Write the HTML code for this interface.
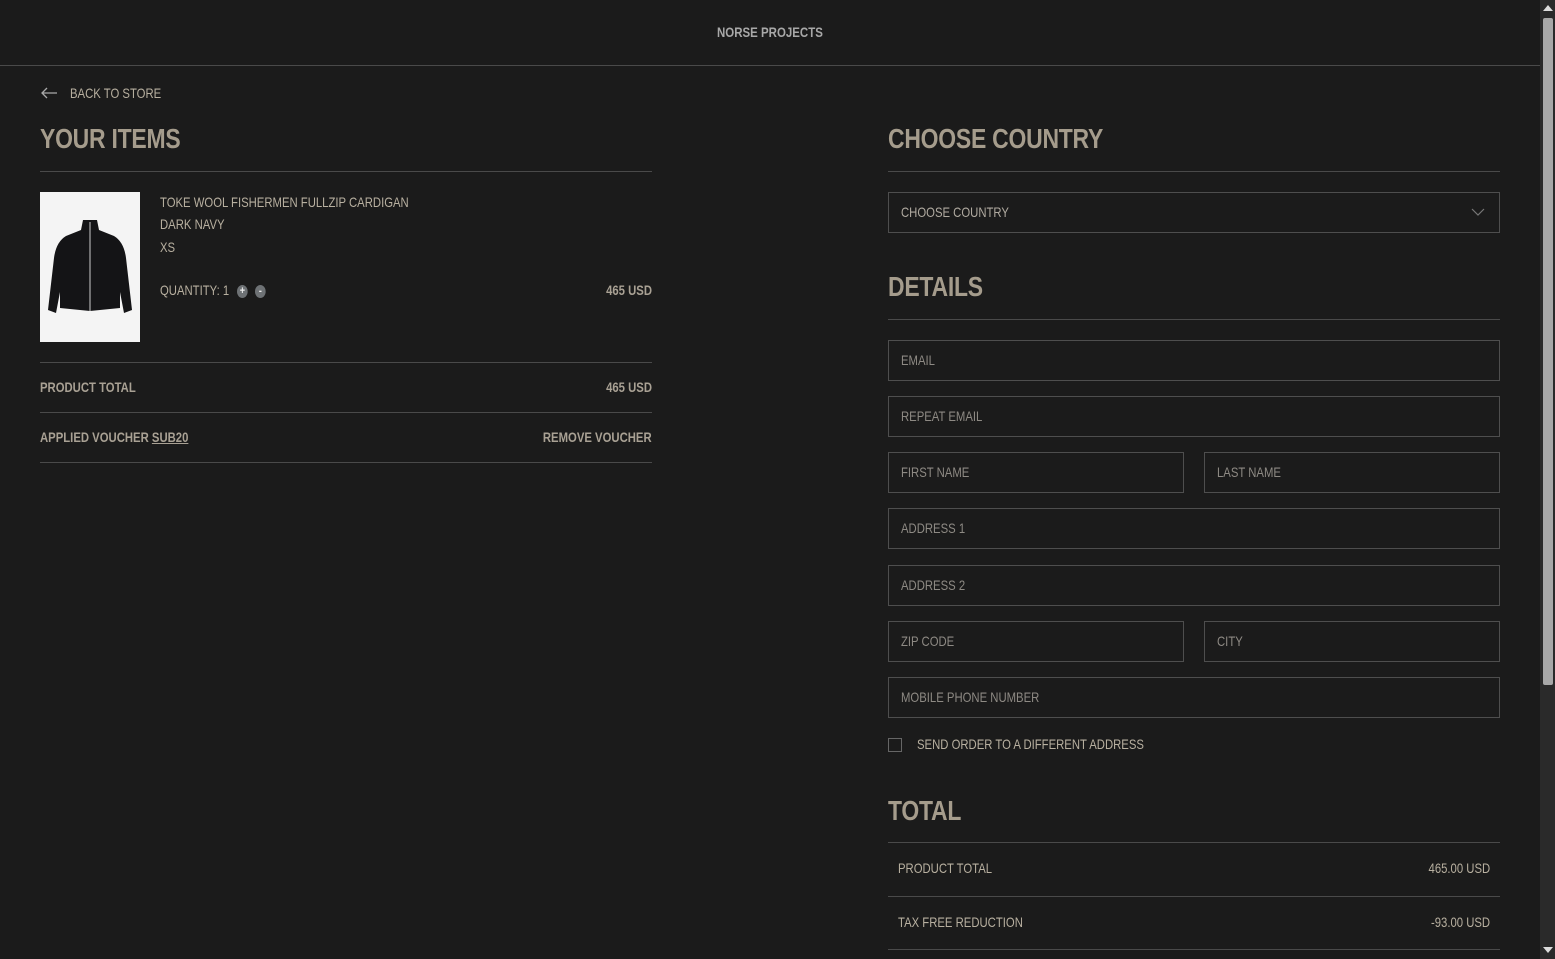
<!DOCTYPE html>
<html><head><meta charset="utf-8"><style>
*{margin:0;padding:0;box-sizing:border-box}
html,body{width:1555px;height:959px;overflow:hidden;background:#1b1b1b}
body{position:relative;font-family:"Liberation Sans Narrow","Liberation Sans",sans-serif;color:#b8b0a0;font-size:13.8px}
.a{position:absolute;white-space:nowrap}
.hd{font-weight:bold;font-size:28px;color:#a59c8c;letter-spacing:-0.3px}
.line{position:absolute;height:1px;background:#4a4a4a}
.box{position:absolute;border:1px solid #4e4e4e;height:41px}
.box span{position:absolute;left:12px;top:12px;font-size:13.8px;color:#8e8a84}
.b{font-weight:bold;color:#a9a194}
</style></head><body>
<div class="a b" style="left:717px;top:24px;font-size:14px;color:#a8a8a8">NORSE PROJECTS</div>
<div class="line" style="left:0;top:65px;width:1540px"></div>

<svg class="a" style="left:40px;top:86px" width="20" height="14" viewBox="0 0 20 14"><path d="M17 7H2M7 2L2 7l5 5" stroke="#aaa" stroke-width="1.3" fill="none"/></svg>
<div class="a" style="left:70px;top:86px">BACK TO STORE</div>

<div class="a hd" style="left:40px;top:123px">YOUR ITEMS</div>
<div class="line" style="left:40px;top:171px;width:612px"></div>

<div class="a" style="left:40px;top:192px;width:100px;height:150px;background:#f4f4f4">
<svg width="100" height="150" viewBox="0 0 100 150"><path d="M43 28 L57 28 L59 38 L74 44 Q84 50 86 66 L92 118 L84 121 L80 100 L80 116 L50 119 L20 116 L20 100 L16 121 L8 118 L14 66 Q16 50 26 44 L41 38 Z" fill="#141416"/><line x1="50" y1="30" x2="50" y2="119" stroke="#ccc" stroke-width="1"/></svg>
</div>
<div class="a" style="left:160px;top:195px">TOKE WOOL FISHERMEN FULLZIP CARDIGAN</div>
<div class="a" style="left:160px;top:217px">DARK NAVY</div>
<div class="a" style="left:160px;top:240px">XS</div>
<div class="a" style="left:160px;top:283px">QUANTITY: 1</div>
<div class="a" style="left:237px;top:285px;width:13px;height:13px;border-radius:50%;background:#6e7275;color:#eee;font-size:11px;line-height:13px;text-align:center;font-weight:bold">+</div>
<div class="a" style="left:255px;top:285px;width:13px;height:13px;border-radius:50%;background:#6e7275;color:#eee;font-size:11px;line-height:12px;text-align:center;font-weight:bold">-</div>
<div class="a b" style="right:903px;top:283px">465 USD</div>

<div class="line" style="left:40px;top:362px;width:612px"></div>
<div class="a b" style="left:40px;top:380px">PRODUCT TOTAL</div>
<div class="a b" style="right:903px;top:380px">465 USD</div>
<div class="line" style="left:40px;top:412px;width:612px"></div>
<div class="a b" style="left:40px;top:430px">APPLIED VOUCHER <u>SUB20</u></div>
<div class="a b" style="right:903px;top:430px">REMOVE VOUCHER</div>
<div class="line" style="left:40px;top:462px;width:612px"></div>

<div class="a hd" style="left:888px;top:123px">CHOOSE COUNTRY</div>
<div class="line" style="left:888px;top:171px;width:612px"></div>
<div class="box" style="left:888px;top:192px;width:612px"><span style="color:#b0aaa0">CHOOSE COUNTRY</span>
<svg style="position:absolute;right:14px;top:15px" width="14" height="9" viewBox="0 0 14 9"><path d="M1 1l6 6 6-6" stroke="#777" fill="none" stroke-width="1.2"/></svg></div>

<div class="a hd" style="left:888px;top:271px">DETAILS</div>
<div class="line" style="left:888px;top:319px;width:612px"></div>
<div class="box" style="left:888px;top:340px;width:612px"><span>EMAIL</span></div>
<div class="box" style="left:888px;top:396px;width:612px"><span>REPEAT EMAIL</span></div>
<div class="box" style="left:888px;top:452px;width:296px"><span>FIRST NAME</span></div>
<div class="box" style="left:1204px;top:452px;width:296px"><span>LAST NAME</span></div>
<div class="box" style="left:888px;top:508px;width:612px"><span>ADDRESS 1</span></div>
<div class="box" style="left:888px;top:565px;width:612px"><span>ADDRESS 2</span></div>
<div class="box" style="left:888px;top:621px;width:296px"><span>ZIP CODE</span></div>
<div class="box" style="left:1204px;top:621px;width:296px"><span>CITY</span></div>
<div class="box" style="left:888px;top:677px;width:612px"><span>MOBILE PHONE NUMBER</span></div>

<div class="a" style="left:888px;top:738px;width:14px;height:14px;border:1px solid #666"></div>
<div class="a" style="left:917px;top:737px">SEND ORDER TO A DIFFERENT ADDRESS</div>

<div class="a hd" style="left:888px;top:795px">TOTAL</div>
<div class="line" style="left:888px;top:842px;width:612px"></div>
<div class="a" style="left:898px;top:861px">PRODUCT TOTAL</div>
<div class="a" style="right:65px;top:861px">465.00 USD</div>
<div class="line" style="left:888px;top:896px;width:612px"></div>
<div class="a" style="left:898px;top:915px">TAX FREE REDUCTION</div>
<div class="a" style="right:65px;top:915px">-93.00 USD</div>
<div class="line" style="left:888px;top:949px;width:612px"></div>

<div class="a" style="left:1540px;top:0;width:15px;height:959px;background:#2a2a2a"></div>
<div class="a" style="left:1543px;top:18px;width:10px;height:667px;background:#a8a8a8;border-radius:2px"></div>
<div class="a" style="left:1543px;top:5px;width:0;height:0;border-left:5px solid transparent;border-right:5px solid transparent;border-bottom:6px solid #ddd"></div>
<div class="a" style="left:1543px;top:947px;width:0;height:0;border-left:5px solid transparent;border-right:5px solid transparent;border-top:6px solid #ddd"></div>
<script>
(function(){var t=document.createElement('span');t.style.cssText='position:absolute;visibility:hidden;font:14px "Liberation Sans Narrow",monospace';t.textContent='MMMMMMMMMM';document.body.appendChild(t);var w1=t.offsetWidth;t.style.fontFamily='monospace';var w2=t.offsetWidth;t.remove();
if(w1===w2){document.querySelectorAll('.a,.box span').forEach(function(e){if(e.children.length&&e.tagName!=='DIV')return;if(!e.textContent.trim())return;e.style.transform='scaleX(0.82)';e.style.transformOrigin=(e.style.right?'right':'left')+' top';});}})();
</script>
</body></html>
